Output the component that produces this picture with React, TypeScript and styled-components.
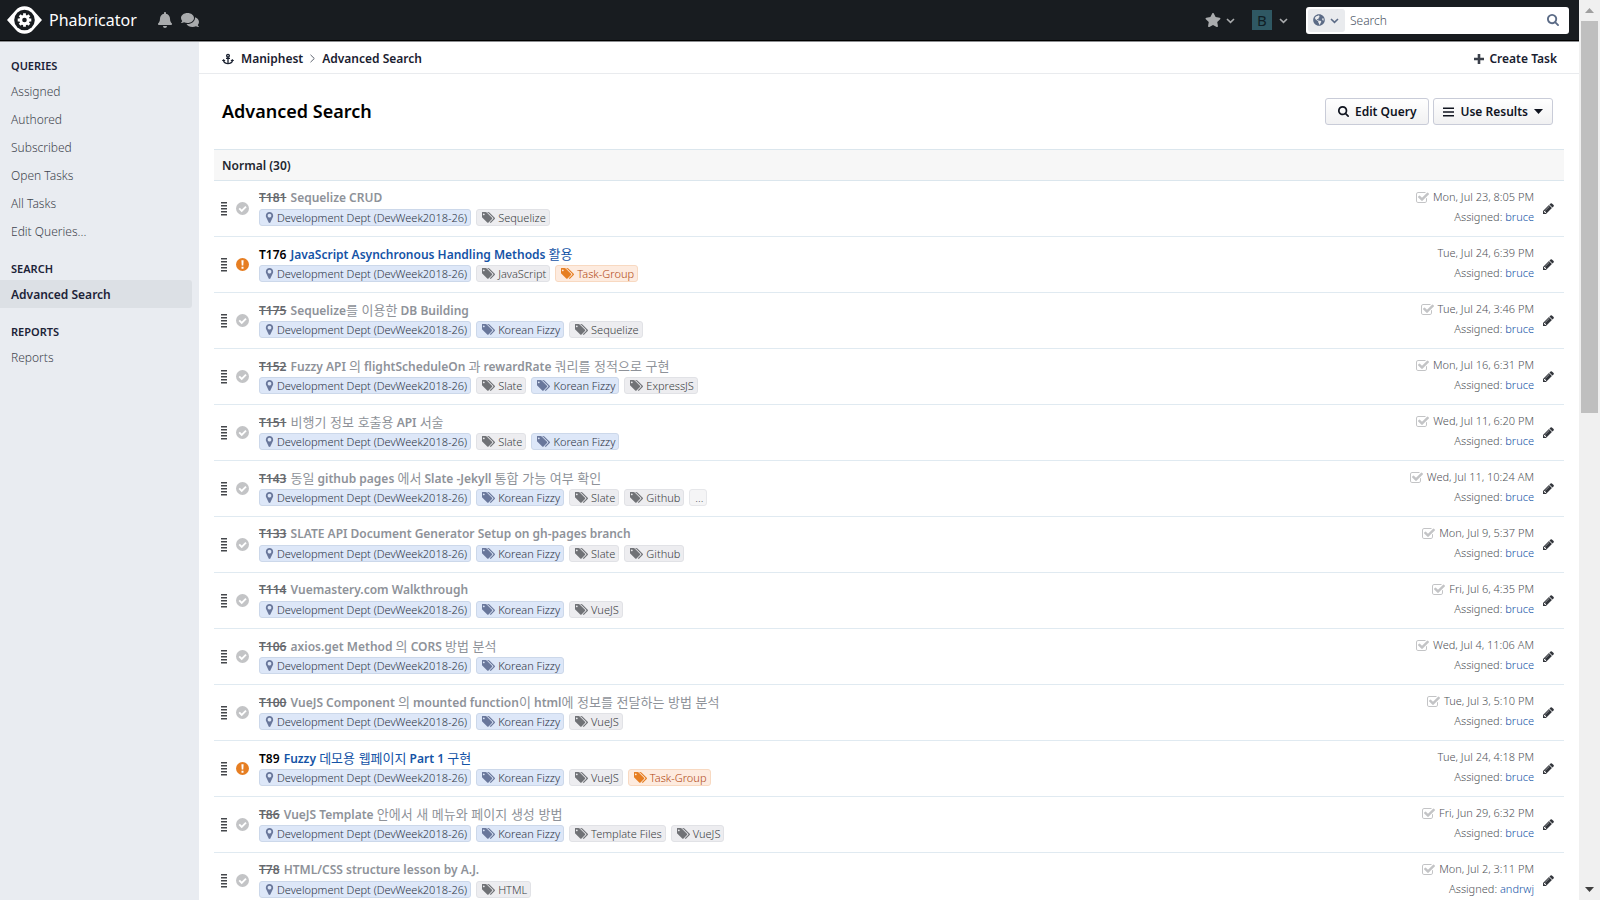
import React from 'react';
import styled, { createGlobalStyle } from 'styled-components';
import { FaAnchor, FaBell, FaComments, FaGlobeAmericas, FaStar } from 'react-icons/fa';

const GlobalStyle = createGlobalStyle`
  * { box-sizing: border-box; }
  body {
    margin: 0;
    background: #fff;
    font-family: "Noto Sans", "Noto Sans CJK KR", sans-serif;
    font-size: 12px;
    color: #000;
  }
  a { text-decoration: none; color: inherit; }
  button, input { font-family: inherit; }
  svg { display: block; flex: none; fill: currentColor; }
`;

/* ---------- icons ---------- */

const PATHS = {
  tags: 'M384 448q0-53-37.5-90.5t-90.5-37.5-90.5 37.5-37.5 90.5 37.5 90.5 90.5 37.5 90.5-37.5 37.5-90.5zm1067 576q0 53-37 90l-491 492q-39 37-91 37-53 0-90-37l-715-716q-38-37-64.5-101t-26.5-117v-416q0-52 38-90t90-38h416q53 0 117 26.5t102 64.5l715 714q37 39 37 91zm384 0q0 53-37 90l-491 492q-39 37-91 37-36 0-59-14t-53-45l470-470q37-37 37-90 0-52-37-91l-715-714q-38-38-102-64.5t-117-26.5h224q53 0 117 26.5t102 64.5l715 714q37 39 37 91z',
  marker: 'M768 640q0-106-75-181t-181-75-181 75-75 181 75 181 181 75 181-75 75-181zm256 0q0 109-33 179l-364 774q-16 33-47.500 52t-67.500 19-67.500-19-46.500-52l-365-774q-33-70-33-179 0-212 150-362t362-150 362 150 150 362z',
  checkSquare: 'M1472 930v318q0 119-84.500 203.500t-203.500 84.500h-832q-119 0-203.500-84.500t-84.500-203.500v-832q0-119 84.500-203.500t203.500-84.500h832q63 0 117 25 15 7 18 23 3 17-9 29l-49 49q-10 10-23 10-3 0-9-2-23-6-45-6h-832q-66 0-113 47t-47 113v832q0 66 47 113t113 47h832q66 0 113-47t47-113v-254q0-13 9-22l64-64q10-10 23-10 6 0 12 3 20 8 20 29zm231-489l-814 814q-24 24-57 24t-57-24l-430-430q-24-24-24-57t24-57l110-110q24-24 57-24t57 24l263 263 647-647q24-24 57-24t57 24l110 110q24 24 24 57t-24 57z',
  pencil: 'M491 1536l91-91-235-235-91 91v107h128v128h107zm523-928q0-22-22-22-10 0-17 7l-542 542q-7 7-7 17 0 22 22 22 10 0 17-7l542-542q7-7 7-17zm-54-192l416 416-832 832h-416v-416zm683 96q0 53-37 90l-166 166-416-416 166-165q36-38 90-38 53 0 91 38l235 234q37 39 37 91z',
  search: 'M1216 832q0-185-131.500-316.500t-316.500-131.500-316.500 131.500-131.500 316.500 131.500 316.500 316.500 131.500 316.500-131.500 131.500-316.500zm512 832q0 52-38 90t-90 38q-54 0-90-38l-343-342q-179 124-399 124-143 0-273.500-55.500t-225-150-150-225-55.500-273.500 55.500-273.500 150-225 225-150 273.500-55.500 273.500 55.500 225 150 150 225 55.500 273.500q0 220-124 399l343 343q37 37 37 90z',
};

type GlyphProps = { name: keyof typeof PATHS; box: string; width: number; height: number };
const Glyph = ({ name, box, width, height }: GlyphProps) => (
  <svg width={width} height={height} viewBox={box} aria-hidden="true">
    <path d={PATHS[name]} />
  </svg>
);
const TagsIcon = () => <Glyph name="tags" box="0 128 1840 1536" width={13} height={11} />;
const MarkerIcon = () => <Glyph name="marker" box="0 128 1024 1536" width={9} height={11} />;
const CheckSquareIcon = () => <Glyph name="checkSquare" box="64 128 1664 1408" width={13} height={11} />;
const PencilIcon = () => <Glyph name="pencil" box="128 128 1536 1536" width={11} height={11} />;
const SearchIcon = ({ size = 12 }: { size?: number }) => (
  <Glyph name="search" box="64 128 1664 1664" width={size} height={size} />
);

const Chevron = ({ right = false }: { right?: boolean }) => (
  <svg width="9" height="9" viewBox="0 0 9 9" aria-hidden="true">
    <path
      d={right ? 'M2.500 .8 L6.300 4.500 L2.500 8.200' : 'M1 3 L4.500 6.300 L8 3'}
      fill="none"
      stroke={right ? '#5f6570' : 'currentColor'}
      strokeWidth={right ? 1 : 1.6}
    />
  </svg>
);

const PlusIcon = () => (
  <svg width="10" height="10" viewBox="0 0 10 10" aria-hidden="true">
    <path d="M3.700 0h2.600v3.700H10v2.600H6.300V10H3.700V6.300H0V3.700h3.700z" fill="#3b404a" />
  </svg>
);
const BarsIcon = () => (
  <svg width="11" height="10" viewBox="0 0 11 10" aria-hidden="true">
    <path d="M0 .5h11v1.500H0zM0 4.200h11v1.500H0zM0 8h11v1.500H0z" />
  </svg>
);
const CaretIcon = () => (
  <svg width="9" height="5" viewBox="0 0 9 5" aria-hidden="true">
    <path d="M0 0h9L4.500 5z" />
  </svg>
);
const GripIcon = () => (
  <svg width="6" height="14" viewBox="0 0 6 14" aria-hidden="true">
    <path d="M0 0h6v1.400H0zM0 3h6v1.400H0zM0 6h6v1.400H0zM0 9h6v1.400H0zM0 12h6v1.400H0z" />
  </svg>
);
const DoneIcon = () => (
  <svg width="13" height="13" viewBox="0 0 13 13" aria-hidden="true">
    <circle cx="6.500" cy="6.500" r="6.500" />
    <path d="M3.200 6.400 L5.700 8.900 L10 4.600" fill="none" stroke="#fff" strokeWidth="1.900" />
  </svg>
);
const OpenIcon = () => (
  <svg width="13" height="13" viewBox="0 0 13 13" aria-hidden="true">
    <circle cx="6.500" cy="6.500" r="6.500" />
    <path d="M5.400 2.300h2.200l-.3 5.200H5.700zM5.500 8.700h2v2h-2z" fill="#fff" />
  </svg>
);
const LogoIcon = () => (
  <svg width="35" height="28" viewBox="0 0 35 28" aria-hidden="true">
    <path d="M0 14 C3 10.500 6 7.500 8.500 4.500 C11 1.500 14 .3 17.500 .3 C21 .3 24 1.500 26.500 4.500 C29 7.500 32 10.500 35 14 C32 17.500 29 20.500 26.500 23.500 C24 26.500 21 27.700 17.500 27.700 C14 27.700 11 26.500 8.500 23.500 C6 20.500 3 17.500 0 14z" fill="#fff" />
    <circle cx="17.500" cy="14" r="10.300" fill="#181c20" />
    <circle cx="17.500" cy="14" r="5.200" fill="#fff" />
    <g stroke="#fff" strokeWidth="2.800">
      <path d="M17.500 7.200v13.600M10.700 14h13.600M12.700 9.200l9.600 9.600M22.300 9.200l-9.600 9.600" />
    </g>
    <circle cx="17.500" cy="14" r="2.300" fill="#181c20" />
  </svg>
);

/* ---------- frame ---------- */

const Frame = styled.div`
  display: grid;
  grid-template-columns: minmax(0, 1fr) 21px;
  height: 100vh;
`;
const Page = styled.div`
  display: flex;
  flex-direction: column;
  min-height: 0;
  overflow: hidden;
`;
const ScrollTrack = styled.div`
  display: flex;
  flex-direction: column;
  align-items: center;
  justify-content: space-between;
  padding: 8px 2px;
  background: #f0f0f0;
`;
const ScrollThumb = styled.div`
  align-self: stretch;
  height: 392px;
  margin: 8px 0 auto;
  background: #bfbfbf;
`;
const ScrollArrow = styled.svg<{ $dark?: boolean }>`
  color: ${(p) => (p.$dark ? '#404040' : '#9f9f9f')};
`;

/* ---------- top bar ---------- */

const TopBar = styled.header`
  display: flex;
  flex: none;
  align-items: center;
  height: 42px;
  padding: 0 10px 1px 7px;
  border-bottom: 1px solid #8b8d90;
  background: #181c20;
  box-shadow: inset 0 -1px #000;
`;
const Brand = styled.a`
  display: flex;
  align-items: center;
  gap: 7px;
  margin-right: 20px;
  color: #fff;
  font-size: 16px;
  font-weight: 400;
  line-height: 24px;
`;
const BarButton = styled.button<{ $gap: number }>`
  display: flex;
  align-items: center;
  gap: 5px;
  margin: 0 ${(p) => p.$gap}px 0 0;
  padding: 0;
  border: 0;
  background: none;
  color: #a9abad;
`;
const Spacer = styled.div`
  flex: 1;
`;
const Avatar = styled.span`
  width: 20px;
  height: 20px;
  margin-right: 2px;
  background: #2f5863;
  color: #101e25;
  font-size: 15px;
  line-height: 20px;
  text-align: center;
`;
const SearchForm = styled.form`
  display: flex;
  align-items: center;
  width: 263px;
  height: 27px;
  padding: 0 10px 0 2px;
  border-radius: 3px;
  background: #fff;
  color: #5b6b86;
`;
const ScopeButton = styled.button`
  display: flex;
  align-items: center;
  gap: 5px;
  height: 23px;
  padding: 0 6px 0 5px;
  border: 0;
  border-radius: 3px;
  background: #e9ebee;
  color: #5b6b86;
`;
const SearchInput = styled.input`
  flex: 1;
  min-width: 0;
  padding: 1px 5px 0;
  border: 0;
  outline: 0;
  background: none;
  font-size: 12px;
  font-weight: 300;
  &::placeholder { color: #4a5363; opacity: 1; }
`;
const PlainButton = styled.button`
  padding: 0;
  border: 0;
  background: none;
  color: inherit;
`;

/* ---------- side navigation ---------- */

const Body = styled.div`
  display: grid;
  flex: 1;
  grid-template-columns: 199px minmax(0, 1fr);
  min-height: 0;
`;
const SideNav = styled.nav`
  padding-right: 7px;
  background: #e9ecf1;
`;
const NavHeading = styled.h2`
  margin: 0;
  padding: 13px 11px 0;
  color: #1c2338;
  font-size: 11px;
  font-weight: 600;
  line-height: 22px;
  text-transform: uppercase;
`;
const NavLink = styled.a<{ $active?: boolean }>`
  display: block;
  padding: 2px 11px 0;
  border-radius: 0 3px 3px 0;
  background: ${(p) => (p.$active ? '#dce0e5' : 'transparent')};
  color: ${(p) => (p.$active ? '#1c2338' : '#3f454e')};
  font-size: 12px;
  font-weight: ${(p) => (p.$active ? 600 : 300)};
  line-height: 26px;
`;

/* ---------- content ---------- */

const Content = styled.main`
  min-width: 0;
  overflow: hidden;
`;
const CrumbBar = styled.div`
  display: flex;
  align-items: center;
  justify-content: space-between;
  height: 32px;
  padding: 2px 22px 0 23px;
  border-bottom: 1px solid #e9ebee;
  color: #19202f;
  font-weight: 600;
`;
const Crumbs = styled.div`
  display: flex;
  align-items: center;
  gap: 5px;
`;
const IconLink = styled.a<{ $gap: number }>`
  display: flex;
  align-items: center;
  gap: ${(p) => p.$gap}px;
`;
const TitleBar = styled.div`
  display: flex;
  align-items: center;
  justify-content: space-between;
  height: 75px;
  padding: 0 26px 0 23px;
`;
const PageTitle = styled.h1`
  margin: 0;
  padding-bottom: 2px;
  font-size: 18px;
  font-weight: 600;
`;
const Actions = styled.div`
  display: flex;
  gap: 4px;
`;
const ActionButton = styled.button<{ $inset: number }>`
  display: flex;
  align-items: center;
  gap: 6px;
  height: 27px;
  padding: 0 ${(p) => p.$inset}px;
  border: 1px solid #c9ccd8;
  border-radius: 3px;
  background: linear-gradient(#fff, #f1f1f2);
  color: #10141f;
  font-size: 12px;
  font-weight: 600;
`;
const Results = styled.section`
  margin: 0 15px;
`;
const GroupHeading = styled.h2`
  margin: 0;
  padding: 2px 8px 0;
  border: solid #dbe6ed;
  border-width: 1px 0;
  background: #f7f7f7;
  color: #23272f;
  font-size: 12px;
  font-weight: 600;
  line-height: 28px;
`;
const TaskList = styled.ul`
  margin: 0;
  padding: 0;
  list-style: none;
`;
const TaskRow = styled.li`
  display: flex;
  align-items: center;
  height: 56px;
  padding: 0 10px 0 7px;
  border-bottom: 1px solid #e0eaf1;
`;
const Grip = styled.span`
  margin-right: 9px;
  color: #44474b;
`;
const Status = styled.span<{ $open?: boolean }>`
  margin-right: 10px;
  color: ${(p) => (p.$open ? '#e67e22' : '#c3c4c6')};
`;
const TaskMain = styled.div`
  flex: 1;
  min-width: 0;
  padding-bottom: 3px;
`;
const TaskTitle = styled.div<{ $open?: boolean }>`
  height: 20px;
  color: ${(p) => (p.$open ? '#1453a6' : '#8e9299')};
  font-size: 12px;
  font-weight: 600;
  line-height: 18px;
  white-space: nowrap;
`;
const TaskId = styled.span<{ $open?: boolean }>`
  margin-right: 1px;
  color: ${(p) => (p.$open ? '#000' : '#66696e')};
  text-decoration: ${(p) => (p.$open ? 'none' : 'line-through')};
`;
const Hangul = styled.span`
  font-family: "Noto Sans CJK KR", sans-serif;
  font-size: 13px;
  font-weight: 400;
`;
const Tags = styled.div`
  display: flex;
  gap: 5px;
`;

type Tone = 'blue' | 'grey' | 'orange' | 'more';
const TONES: Record<Tone, { back: string; edge: string; text: string; icon: string }> = {
  blue: { back: '#dde7f8', edge: '#ccd8ea', text: '#2c3344', icon: '#69779b' },
  grey: { back: '#ededf0', edge: '#e1e2e6', text: '#3a3d42', icon: '#707276' },
  orange: { back: '#fdebdf', edge: '#f8d9c1', text: '#b0460f', icon: '#e67e22' },
  more: { back: '#f5f5f6', edge: '#e6e7ea', text: '#55585d', icon: '#707276' },
};
const Tag = styled.a<{ $tone: Tone }>`
  display: flex;
  align-items: center;
  gap: 3px;
  height: 17px;
  padding: 0 3px 0 5px;
  border: 1px solid ${(p) => TONES[p.$tone].edge};
  border-radius: 3px;
  background: ${(p) => TONES[p.$tone].back};
  color: ${(p) => TONES[p.$tone].text};
  font-size: 11px;
  font-weight: 300;
  line-height: 15px;
  white-space: nowrap;
  svg { color: ${(p) => TONES[p.$tone].icon}; }
`;
const Meta = styled.div`
  display: flex;
  flex-direction: column;
  align-items: flex-end;
  margin-right: 9px;
  padding-bottom: 3px;
  color: #4f5257;
  font-size: 11px;
  font-weight: 300;
  line-height: 20px;
`;
const MetaDate = styled.span`
  display: flex;
  align-items: center;
  gap: 4px;
  svg { color: #c3c4c6; }
`;
const Assignee = styled.a`
  color: #1453a6;
`;
const EditButton = styled(PlainButton)`
  color: #32353b;
`;

/* ---------- data ---------- */

type Task = { id: string; title: string; tags: string[]; date: string; open?: boolean; who?: string };

const TASKS: Task[] = [
  { id: 'T181', title: 'Sequelize CRUD', tags: ['Sequelize'], date: 'Mon, Jul 23, 8:05 PM' },
  { id: 'T176', title: 'JavaScript Asynchronous Handling Methods 활용', tags: ['JavaScript', 'Task-Group'], date: 'Tue, Jul 24, 6:39 PM', open: true },
  { id: 'T175', title: 'Sequelize를 이용한 DB Building', tags: ['Korean Fizzy', 'Sequelize'], date: 'Tue, Jul 24, 3:46 PM' },
  { id: 'T152', title: 'Fuzzy API 의 flightScheduleOn 과 rewardRate 쿼리를 정적으로 구현', tags: ['Slate', 'Korean Fizzy', 'ExpressJS'], date: 'Mon, Jul 16, 6:31 PM' },
  { id: 'T151', title: '비행기 정보 호출용 API 서술', tags: ['Slate', 'Korean Fizzy'], date: 'Wed, Jul 11, 6:20 PM' },
  { id: 'T143', title: '동일 github pages 에서 Slate -Jekyll 통합 가능 여부 확인', tags: ['Korean Fizzy', 'Slate', 'Github', '...'], date: 'Wed, Jul 11, 10:24 AM' },
  { id: 'T133', title: 'SLATE API Document Generator Setup on gh-pages branch', tags: ['Korean Fizzy', 'Slate', 'Github'], date: 'Mon, Jul 9, 5:37 PM' },
  { id: 'T114', title: 'Vuemastery.com Walkthrough', tags: ['Korean Fizzy', 'VueJS'], date: 'Fri, Jul 6, 4:35 PM' },
  { id: 'T106', title: 'axios.get Method 의 CORS 방법 분석', tags: ['Korean Fizzy'], date: 'Wed, Jul 4, 11:06 AM' },
  { id: 'T100', title: 'VueJS Component 의 mounted function이 html에 정보를 전달하는 방법 분석', tags: ['Korean Fizzy', 'VueJS'], date: 'Tue, Jul 3, 5:10 PM' },
  { id: 'T89', title: 'Fuzzy 데모용 웹페이지 Part 1 구현', tags: ['Korean Fizzy', 'VueJS', 'Task-Group'], date: 'Tue, Jul 24, 4:18 PM', open: true },
  { id: 'T86', title: 'VueJS Template 안에서 새 메뉴와 페이지 생성 방법', tags: ['Korean Fizzy', 'Template Files', 'VueJS'], date: 'Fri, Jun 29, 6:32 PM' },
  { id: 'T78', title: 'HTML/CSS structure lesson by A.J.', tags: ['HTML'], date: 'Mon, Jul 2, 3:11 PM', who: 'andrwj' },
];

const NAV = [
  { heading: 'Queries', links: ['Assigned', 'Authored', 'Subscribed', 'Open Tasks', 'All Tasks', 'Edit Queries...'] },
  { heading: 'Search', links: ['Advanced Search'] },
  { heading: 'Reports', links: ['Reports'] },
];

const toneOf = (tag: string): Tone => {
  if (tag === 'Korean Fizzy') return 'blue';
  if (tag === 'Task-Group') return 'orange';
  return tag === '...' ? 'more' : 'grey';
};

const MixedText = ({ text }: { text: string }) => (
  <>
    {text.split(/([가-힣]+(?: [가-힣]+)*)/).map((part, i) =>
      i % 2 ? <Hangul key={i} lang="ko">{part}</Hangul> : part,
    )}
  </>
);

const TaskItem = ({ task }: { task: Task }) => (
  <TaskRow>
    <Grip><GripIcon /></Grip>
    <Status $open={task.open}>{task.open ? <OpenIcon /> : <DoneIcon />}</Status>
    <TaskMain>
      <TaskTitle $open={task.open}>
        <TaskId $open={task.open}>{task.id}</TaskId>{' '}
        <a href={`#${task.id}`}><MixedText text={task.title} /></a>
      </TaskTitle>
      <Tags>
        <Tag $tone="blue" href="#project"><MarkerIcon />Development Dept (DevWeek2018-26)</Tag>
        {task.tags.map((tag) => (
          <Tag key={tag} $tone={toneOf(tag)} href="#tag">
            {tag !== '...' && <TagsIcon />}
            {tag}
          </Tag>
        ))}
      </Tags>
    </TaskMain>
    <Meta>
      <MetaDate>{!task.open && <CheckSquareIcon />}{task.date}</MetaDate>
      <span>Assigned: <Assignee href="#user">{task.who ?? 'bruce'}</Assignee></span>
    </Meta>
    <EditButton type="button" aria-label={`Edit ${task.id}`}><PencilIcon /></EditButton>
  </TaskRow>
);

export default function App() {
  return (
    <Frame>
      <GlobalStyle />
      <Page>
        <TopBar>
          <Brand href="#home"><LogoIcon />Phabricator</Brand>
          <BarButton type="button" $gap={8} aria-label="Notifications"><FaBell size={16} /></BarButton>
          <BarButton type="button" $gap={0} aria-label="Messages"><FaComments size={18} /></BarButton>
          <Spacer />
          <BarButton type="button" $gap={17} aria-label="Favorites"><FaStar size={16} /><Chevron /></BarButton>
          <BarButton type="button" $gap={18} aria-label="Account"><Avatar>B</Avatar><Chevron /></BarButton>
          <SearchForm role="search">
            <ScopeButton type="button" aria-label="Search scope"><FaGlobeAmericas size={12} /><Chevron /></ScopeButton>
            <SearchInput type="text" placeholder="Search" aria-label="Search" />
            <PlainButton type="submit" aria-label="Run search"><SearchIcon /></PlainButton>
          </SearchForm>
        </TopBar>
        <Body>
          <SideNav>
            {NAV.map((group) => (
              <React.Fragment key={group.heading}>
                <NavHeading>{group.heading}</NavHeading>
                {group.links.map((link) => (
                  <NavLink key={link} href="#query" $active={link === 'Advanced Search'}>{link}</NavLink>
                ))}
              </React.Fragment>
            ))}
          </SideNav>
          <Content>
            <CrumbBar>
              <Crumbs>
                <IconLink href="#maniphest" $gap={7}><FaAnchor size={12} />Maniphest</IconLink>
                <Chevron right />
                <span>Advanced Search</span>
              </Crumbs>
              <IconLink href="#create" $gap={5}><PlusIcon />Create Task</IconLink>
            </CrumbBar>
            <TitleBar>
              <PageTitle>Advanced Search</PageTitle>
              <Actions>
                <ActionButton type="button" $inset={12}><SearchIcon size={11} />Edit Query</ActionButton>
                <ActionButton type="button" $inset={9}><BarsIcon />Use Results<CaretIcon /></ActionButton>
              </Actions>
            </TitleBar>
            <Results>
              <GroupHeading>Normal (30)</GroupHeading>
              <TaskList>
                {TASKS.map((task) => <TaskItem key={task.id} task={task} />)}
              </TaskList>
            </Results>
          </Content>
        </Body>
      </Page>
      <ScrollTrack aria-hidden="true">
        <ScrollArrow width="9" height="5" viewBox="0 0 9 5"><path d="M0 5h9L4.500 0z" /></ScrollArrow>
        <ScrollThumb />
        <ScrollArrow $dark width="9" height="5" viewBox="0 0 9 5"><path d="M0 0h9L4.500 5z" /></ScrollArrow>
      </ScrollTrack>
    </Frame>
  );
}
